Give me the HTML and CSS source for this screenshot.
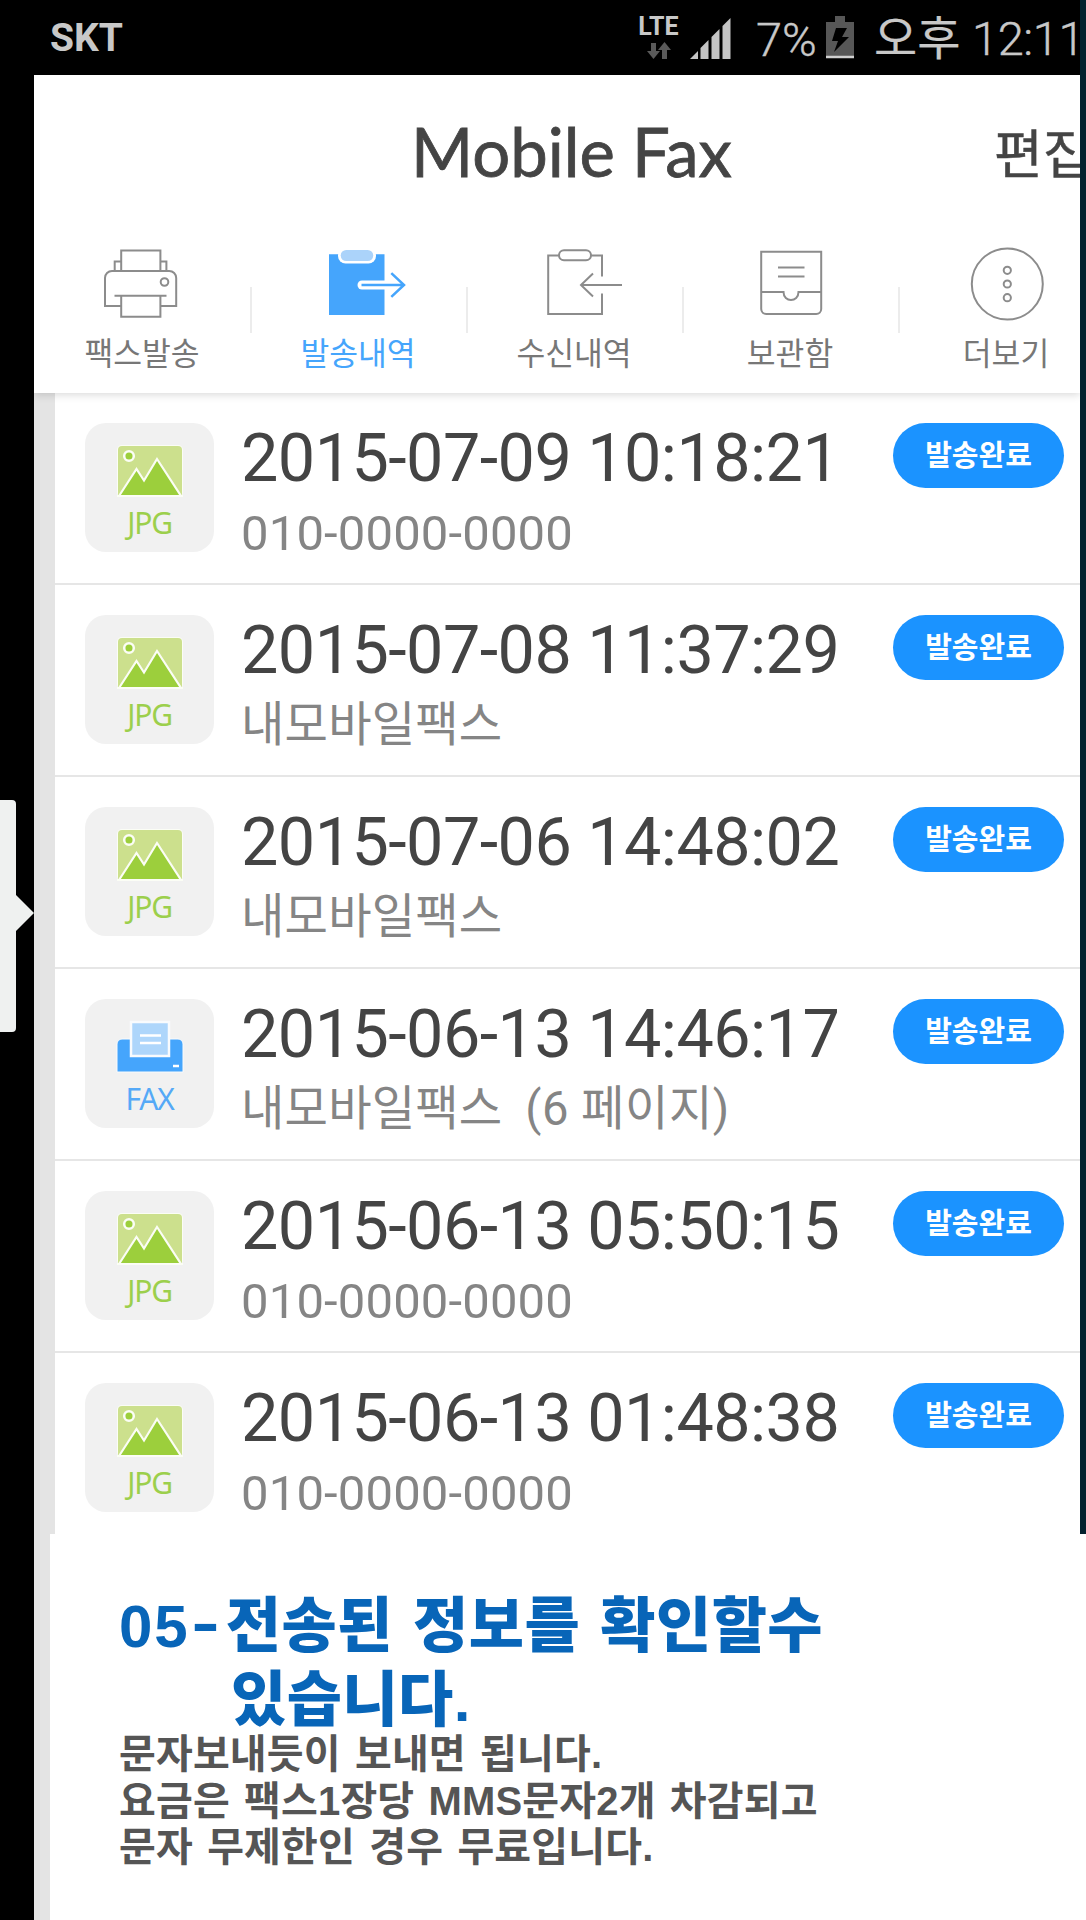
FILE: index.html
```html
<!DOCTYPE html>
<html lang="ko">
<head>
    <meta charset="UTF-8">
    <meta name="viewport" content="width=device-width, initial-scale=1.0">
    <title>Mobile Fax</title>
    <link rel="stylesheet" href="styles.css">
</head>
<body>

<svg class="defs" width="0" height="0">
    <symbol id="jpg" viewBox="0 0 70 56">
        <rect x="2" y="2" width="66" height="52" rx="5" fill="#fbfdf5"/>
        <path d="M3 52V7a4 4 0 0 1 4-4h56a4 4 0 0 1 4 4v45z" fill="#cce08d"/>
        <path d="M4 53L21.5 26 29 37.500 42 16 66 53z" fill="#9ccf3c" stroke="#fbfdf5" stroke-width="2.200"/>
        <circle cx="14" cy="13" r="4.800" fill="#9ccf3c" stroke="#fbfdf5" stroke-width="2.500"/>
        <path d="M2 53h66" stroke="#fbfdf5" stroke-width="2"/>
    </symbol>
    <symbol id="fax" viewBox="0 0 70 56">
        <path d="M2 53V25a5 5 0 0 1 5-5h56a5 5 0 0 1 5 5v28z" fill="#45a5fc" stroke="#f9fbfd"/>
        <path d="M16 3h38v34H16z" fill="#aed6fb" stroke="#f9fbfd" stroke-width="2.500"/>
        <path d="M25 16.500h21M25 24h21M58 47h6" stroke="#fff" stroke-width="2.400"/>
    </symbol>
</svg>

<div class="screen">
    <div class="phone">
        <div class="statusbar">
            <span class="carrier">SKT</span>
            <div class="lte">
                <span>LTE</span>
                <svg width="24" height="18" viewBox="0 0 24 18" fill="#5a5a5a">
                    <path d="M4 1h5v8h4l-6.500 8L0 9h4z"/>
                    <path d="M15 17h5V8h4L17.500 0 11 8h4z"/>
                </svg>
            </div>
            <svg class="signal" width="41" height="41" viewBox="0 0 41 41" fill="#c4c4c4">
                <path d="M0 41l8-8v8zM10.500 41V30l8-8v19zM21.500 41V19l8-8v30zM32.500 41V8L40.500 0v41z"/>
            </svg>
            <span class="percent">7%</span>
            <svg class="battery" width="28" height="43" viewBox="0 0 28 43">
                <path d="M9 0h10v6h9v34H0V6h9z" fill="#575757"/>
                <path d="M0 41h28" stroke="#d0d0d0" stroke-width="2.500"/>
                <path d="M10 12h11l-5 9h7L8 36l4-11H6z" fill="#000"/>
            </svg>
            <span class="ampm">오후</span>
            <span class="clock">12:11</span>
        </div>

        <div class="app">
            <div class="header">
                <h1 class="title">Mobile Fax</h1>
                <span class="edit">편집</span>
            </div>
            <div class="tabs">
                <div class="tab">
                    <svg width="80" height="76" viewBox="0 0 80 76">
                        <path d="M19.200 25V4.500h39.200V25M19.200 15.500h-6.500V25M58.400 15.500h6V25"/>
                        <path d="M19.200 60H3V32a7 7 0 0 1 7-7h57.200a7 7 0 0 1 7 7v28H58.400M12.500 49.800h52M19.200 49.800v21h39.200v-21"/>
                        <circle cx="62.500" cy="36" r="3.800"/>
                    </svg>
                    <span>팩스발송</span>
                </div>
                <div class="tab active">
                    <svg width="80" height="76" viewBox="0 0 80 76">
                        <path d="M11 8.300h55.500V69H11z" fill="#45a5fc" stroke="none"/>
                        <rect x="20" y="2" width="38" height="15.500" rx="7.500" fill="#fff" stroke="none"/>
                        <rect x="22.700" y="4" width="32.500" height="11" rx="5.500" fill="#abd3fa" stroke="none"/>
                        <path d="M44 39h24" stroke="#fff" stroke-width="9" stroke-linecap="round"/>
                        <path d="M43.500 39H86M73.300 27.200L86 39 73.300 50.800" stroke="#45a5fc" stroke-width="2.500"/>
                    </svg>
                    <span>발송내역</span>
                </div>
                <div class="tab">
                    <svg width="80" height="76" viewBox="0 0 80 76">
                        <path d="M25 9.500H14.200V68H68V47.500M68 30.500v-21H57"/>
                        <rect x="25" y="4.300" width="32" height="10" rx="5"/>
                        <path d="M88 39H47M59 27.500L47 39l12 11.500"/>
                    </svg>
                    <span>수신내역</span>
                </div>
                <div class="tab">
                    <svg width="80" height="76" viewBox="0 0 80 76">
                        <path d="M11.200 5.700h60V63a5 5 0 0 1-5 5h-50a5 5 0 0 1-5-5z"/>
                        <path d="M28 21.500h26.500M28 30.500h26.500M11.200 46H33.500c0 10.500 15 10.500 15 0h22.700"/>
                    </svg>
                    <span>보관함</span>
                </div>
                <div class="tab">
                    <svg width="80" height="76" viewBox="0 0 80 76">
                        <circle cx="41.300" cy="38" r="35.500"/>
                        <circle cx="41.300" cy="24.300" r="3.600"/>
                        <circle cx="41.300" cy="38" r="3.600"/>
                        <circle cx="41.300" cy="51.700" r="3.600"/>
                    </svg>
                    <span>더보기</span>
                </div>
            </div>
        </div>

        <div class="list">
            <div class="row">
                <div class="thumb"><svg><use href="#jpg"/></svg><span>JPG</span></div>
                <div class="info"><div class="date">2015-07-09 10:18:21</div><div class="to">010-0000-0000</div></div>
                <span class="badge">발송완료</span>
            </div>
            <div class="row">
                <div class="thumb"><svg><use href="#jpg"/></svg><span>JPG</span></div>
                <div class="info"><div class="date">2015-07-08 11:37:29</div><div class="to name">내모바일팩스</div></div>
                <span class="badge">발송완료</span>
            </div>
            <div class="row">
                <div class="thumb"><svg><use href="#jpg"/></svg><span>JPG</span></div>
                <div class="info"><div class="date">2015-07-06 14:48:02</div><div class="to name">내모바일팩스</div></div>
                <span class="badge">발송완료</span>
            </div>
            <div class="row">
                <div class="thumb fax"><svg><use href="#fax"/></svg><span>FAX</span></div>
                <div class="info"><div class="date">2015-06-13 14:46:17</div><div class="to name">내모바일팩스 <span class="pages">(6 페이지)</span></div></div>
                <span class="badge">발송완료</span>
            </div>
            <div class="row">
                <div class="thumb"><svg><use href="#jpg"/></svg><span>JPG</span></div>
                <div class="info"><div class="date">2015-06-13 05:50:15</div><div class="to">010-0000-0000</div></div>
                <span class="badge">발송완료</span>
            </div>
            <div class="row">
                <div class="thumb"><svg><use href="#jpg"/></svg><span>JPG</span></div>
                <div class="info"><div class="date">2015-06-13 01:48:38</div><div class="to">010-0000-0000</div></div>
                <span class="badge">발송완료</span>
            </div>
        </div>
    </div>

    <div class="caption">
        <h2><span class="num">05<span class="dash">-</span></span>전송된 정보를 확인할수<br><span class="indent">있습니다.</span></h2>
        <p>문자보내듯이 보내면 됩니다.<br>요금은 팩스1장당 MMS문자2개 차감되고<br>문자 무제한인 경우 무료입니다.</p>
    </div>

    <!-- handle of the side panel, lies over the left edge -->
    <svg class="handle" width="34" height="232" viewBox="0 0 34 232">
        <path d="M0 0h12a4 4 0 0 1 4 4v91l18 18-18 18v97a4 4 0 0 1-4 4H0z" fill="#eff1f0"/>
    </svg>
</div>

</body>
</html>
```
FILE: styles.css
```css
* {
    box-sizing: border-box;
}
body {
    margin: 0;
    font-family: Roboto, "Noto Sans CJK KR", sans-serif;
    background-color: #000;
}
h1, h2, p {
    margin: 0;
}
.defs {
    position: absolute;
}
.screen {
    position: relative;
    width: 1086px;
    height: 1920px;
    overflow: hidden;
    background-color: #000;
}
.phone {
    height: 1534px;
    border-right: 6px solid #03222f;
    overflow: hidden;
}
.statusbar {
    display: flex;
    height: 75px;
    padding-left: 50px;
    color: #c8c8c8;
    white-space: nowrap;
    line-height: 75px;
}
.carrier {
    flex: none;
    width: 588px;
    padding-top: 1px;
    font-size: 39px;
    font-weight: bold;
}
.lte {
    flex: none;
    display: flex;
    flex-direction: column;
    align-items: center;
    width: 41px;
    padding-top: 15px;
    font-size: 25px;
    font-weight: bold;
    line-height: 24px;
}
.lte svg {
    margin-top: 3px;
}
.signal {
    flex: none;
    margin: 18px 0 0 11px;
}
.percent {
    flex: none;
    width: 70px;
    margin-left: 25px;
    padding-top: 2px;
    font-size: 47px;
    font-weight: 300;
    -webkit-text-stroke: 0.4px #c8c8c8;
}
.battery {
    flex: none;
    margin-top: 16px;
}
.ampm {
    flex: none;
    width: 98px;
    margin-left: 20px;
    padding-top: 1px;
    font-size: 47px;
    -webkit-text-stroke: 0.2px #c8c8c8;
}
.clock {
    padding-top: 1px;
    font-size: 47px;
    font-weight: 300;
    letter-spacing: -0.400px;
    -webkit-text-stroke: 0.4px #c8c8c8;
}

.app {
    height: 318px;
    margin-left: 34px;
    background-color: #fff;
    box-shadow: 0 2px 8px rgba(0, 0, 0, 0.15);
    position: relative;
}
.header {
    display: flex;
    height: 171px;
    color: #444;
    white-space: nowrap;
}
.title {
    flex: none;
    width: 583px;
    margin-left: 377px;
    padding-top: 36px;
    font-family: Lato, sans-serif;
    font-size: 67px;
    font-weight: normal;
    line-height: 80px;
    -webkit-text-stroke: 0.8px #444;
}
.edit {
    padding-top: 41px;
    font-size: 53px;
    line-height: 80px;
    -webkit-text-stroke: 0.5px #444;
}
.tabs {
    display: flex;
}
.tab {
    position: relative;
    flex: none;
    display: flex;
    flex-direction: column;
    align-items: center;
    width: 216px;
    color: #777;
    font-size: 31.300px;
    line-height: 40px;
}
.tab + .tab::before {
    content: "";
    position: absolute;
    left: 0;
    top: 41px;
    width: 2px;
    height: 46px;
    background-color: #ececec;
}
.tab svg {
    fill: none;
    stroke: #8c8c8c;
    stroke-width: 2;
    overflow: visible;
}
.tab span {
    margin-top: 13px;
}
.tab.active {
    color: #45a5fc;
}

.list {
    margin-left: 34px;
    border-left: 21px solid #e4e4e4;
    background-color: #fff;
}
.row {
    display: flex;
    height: 192px;
    padding: 30px 16px 0 30px;
    border-bottom: 2px solid #e6e6e6;
}
.row:last-child {
    border-bottom: none;
}
.thumb {
    flex: none;
    display: flex;
    flex-direction: column;
    align-items: center;
    width: 129px;
    height: 129px;
    padding-top: 20px;
    border-radius: 21px;
    background-color: #f1f1f1;
    color: #9ccf4c;
    font-family: "Noto Sans", sans-serif;
    font-size: 30px;
    line-height: 40px;
    letter-spacing: -1.200px;
}
.thumb svg {
    width: 70px;
    height: 56px;
}
.thumb span {
    margin-top: 4px;
}
.thumb.fax {
    color: #55a9f7;
}
.info {
    flex: none;
    width: 652px;
    margin-left: 27px;
    white-space: nowrap;
}
.date {
    margin-top: -3px;
    color: #444;
    font-size: 66.500px;
    line-height: 76px;
    letter-spacing: -0.550px;
}
.to {
    margin-top: 8px;
    color: #858585;
    font-size: 49px;
    line-height: 60px;
    letter-spacing: 0.150px;
}
.to.name {
    margin-top: 7px;
    font-size: 47.200px;
}
.pages {
    margin-left: 11px;
    letter-spacing: 0.500px;
}
.badge {
    flex: none;
    width: 171px;
    height: 65px;
    border-radius: 33px;
    background-color: #1b93ff;
    color: #fff;
    font-size: 29px;
    font-weight: bold;
    line-height: 67px;
    text-align: center;
}

.caption {
    height: 386px;
    margin-left: 34px;
    padding: 56px 0 0 69px;
    border-left: 16px solid #e4e4e4;
    background-color: #fff;
    font-family: "Liberation Sans", "Noto Sans CJK KR", sans-serif;
    white-space: nowrap;
}
.caption h2 {
    color: #0865b8;
    font-size: 60px;
    font-weight: 900;
    line-height: 74px;
    letter-spacing: 0.500px;
    word-spacing: 3px;
}
.num {
    letter-spacing: 2px;
}
.dash {
    display: inline-block;
    margin: 0 8px 0 6px;
    transform: translateY(-4px) scaleX(1.4);
}
.indent {
    margin-left: 112px;
}
.caption p {
    margin-top: -7px;
    color: #555;
    font-size: 40px;
    font-weight: bold;
    line-height: 46.500px;
    letter-spacing: 0.150px;
    word-spacing: 3px;
}
.handle {
    position: absolute;
    left: 0;
    top: 800px;
}
```
